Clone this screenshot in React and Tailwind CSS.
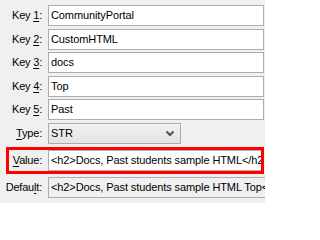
import React from 'react'

const FONT = { fontFamily: '"Liberation Sans", Arial, sans-serif' }

function Label({ before, hot, after, className = '' }) {
  return (
    <div className={`shrink-0 text-right text-[11px] leading-none tracking-[-0.2px] text-black ${className}`}>
      {before}
      <span className="underline decoration-1 underline-offset-[2px]">{hot}</span>
      {after}
    </div>
  )
}

function TextBox({ value, muted = false, className = '' }) {
  return (
    <div
      className={`flex h-[21px] min-w-0 flex-1 items-center overflow-hidden whitespace-nowrap border border-[#abadb3] pl-[2px] text-[11px] tracking-[-0.1px] text-black ${
        muted ? 'border-r-0 bg-[#f0f0f0]' : 'bg-white'
      } ${className}`}
    >
      {value}
    </div>
  )
}

const keys = ['CommunityPortal', 'CustomHTML', 'docs', 'Top', 'Past']

export default function App() {
  return (
    <div
      className="flex h-[203px] w-[265px] flex-col gap-[2.5px] overflow-hidden bg-[#f0f0f0] pt-[5px]"
      style={FONT}
    >
      {keys.map((value, index) => (
        <div key={index} className="flex h-[21px] items-center pr-[1px]">
          <Label before="Key " hot={String(index + 1)} after=":" className="w-[42px]" />
          <div className="w-[6px] shrink-0" />
          <TextBox value={value} />
        </div>
      ))}

      <div className="flex h-[21px] items-center">
        <Label hot="T" after="ype:" className="w-[42px]" />
        <div className="w-[6px] shrink-0" />
        <div className="flex h-[21px] w-[133px] items-center justify-between border border-[#acacac] bg-gradient-to-b from-[#f2f2f2] to-[#e4e4e4] pl-[2px] pr-[5px] text-[11px] text-black">
          <span>STR</span>
          <svg width="10" height="7" viewBox="0 0 10 7">
            <polyline points="1.5,1.5 5,5 8.5,1.5" fill="none" stroke="#505050" strokeWidth="2" />
          </svg>
        </div>
      </div>

      <div className="ml-[6px] mt-[0.5px] flex h-[27px] w-[258px] items-center overflow-hidden border-[3px] border-[#ff0000]">
        <Label hot="V" after="alue:" className="w-[33px]" />
        <div className="w-[6px] shrink-0" />
        <TextBox value="<h2>Docs, Past students sample HTML</h2>" className="-mr-[4px] border-r-0" />
      </div>

      <div className="mt-[0.5px] flex h-[21px] items-center">
        <Label before="Defau" hot="l" after="t:" className="w-[42px]" />
        <div className="w-[6px] shrink-0" />
        <TextBox value="<h2>Docs, Past students sample HTML Top</h2>" muted />
      </div>
    </div>
  )
}
